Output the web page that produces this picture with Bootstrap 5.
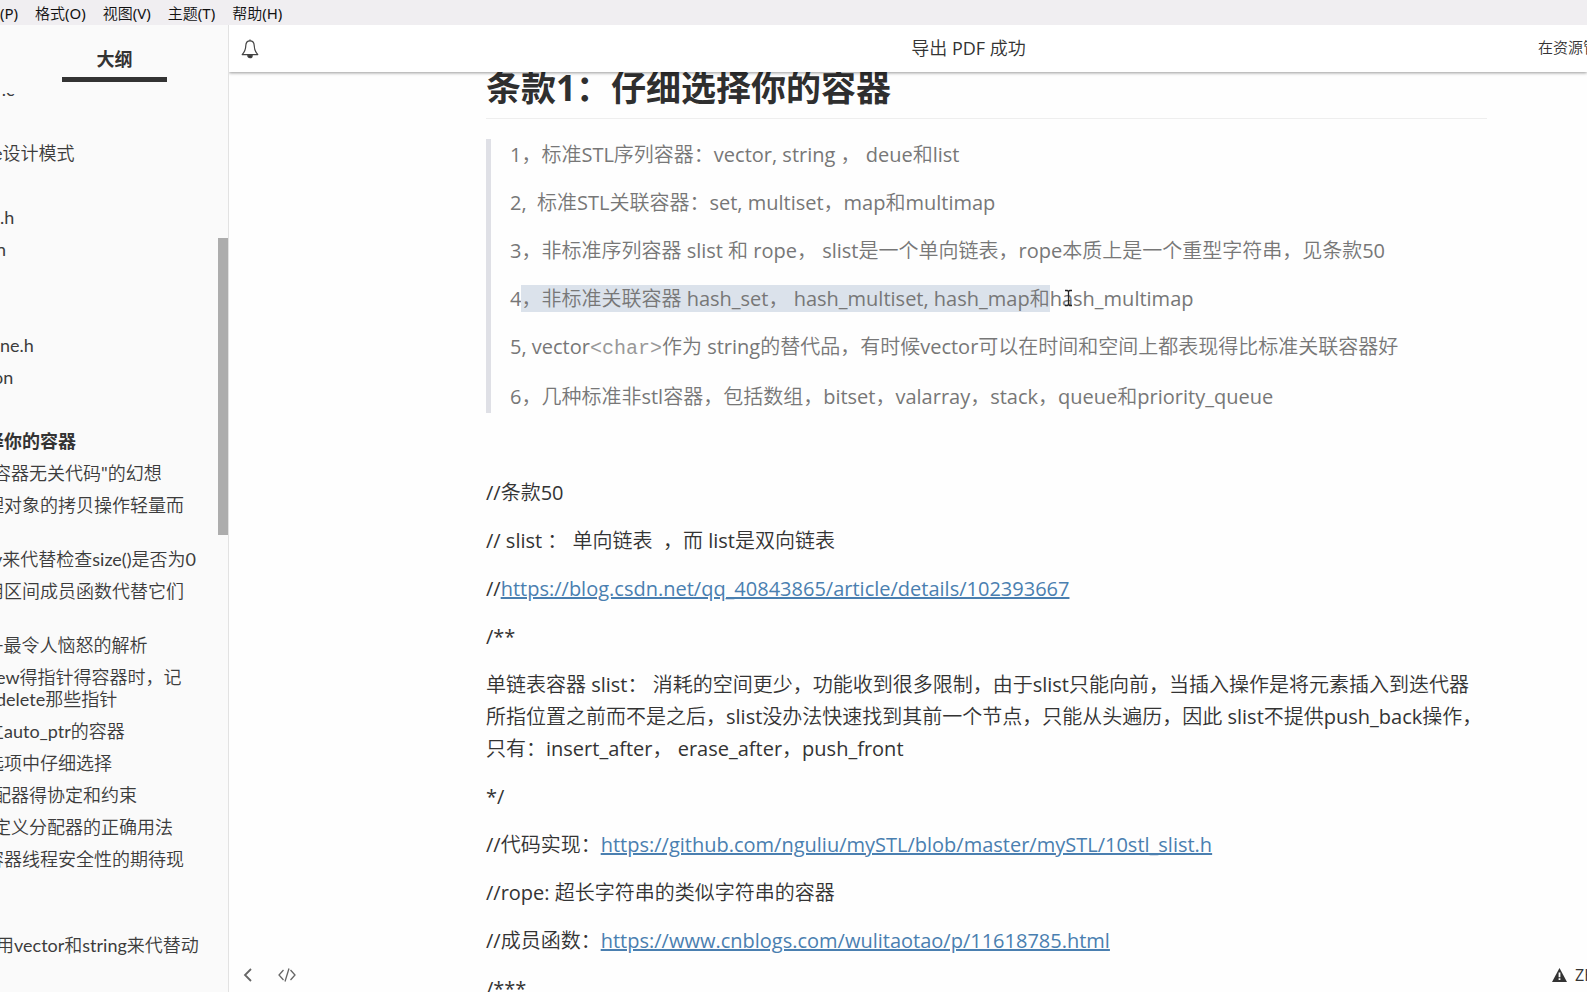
<!DOCTYPE html>
<html lang="zh-CN">
<head>
<meta charset="utf-8">
<meta name="viewport" content="width=device-width, initial-scale=1">
<title>条款1：仔细选择你的容器</title>
<link href="https://cdn.jsdelivr.net/npm/bootstrap@5.3.0/dist/css/bootstrap.min.css" rel="stylesheet">
<style>
  body { font-family: "Open Sans", "Noto Sans CJK SC DemiLight", "Noto Sans CJK SC", sans-serif; color: #333; background: #fefefe; }
  button { color: inherit; }

  .menu-strip { height: 25px; background: #f0eef1; font-family: "Noto Sans", "Noto Sans CJK SC DemiLight", "Noto Sans CJK SC", sans-serif; font-size: 15px; line-height: 27px; gap: 17px; }
  .menu-strip button { color: #111; white-space: nowrap; }

  .outline-pane { width: 229px; background: #fafafa; border-right: 1px solid #e2e2e2; font-size: 18px; }
  .outline-head { height: 68px; padding: 18px 0 0 62px; }
  .outline-tab { width: 105px; height: 39px; border-bottom: 5px solid #333 !important; font-family: "Noto Sans CJK SC", sans-serif; line-height: 30px; }
  .outline-list { margin-top: -20px; line-height: 22px; font-family: Lato, "Noto Sans CJK SC DemiLight", "Noto Sans CJK SC", sans-serif; }
  .outline-list li { padding: 5px 0; min-height: 32px; white-space: nowrap; }
  .outline-list .two-lines { min-height: 54px; }
  .outline-list a { color: #3c3c3c; text-decoration: none; display: block; }
  .outline-list .fw-bold { color: #333; font-family: "Open Sans", "Noto Sans CJK SC", sans-serif; }
  .cut-s { margin-left: -4px; }
  .cut-m { margin-left: -7px; }
  .cut-l { margin-left: -14px; }
  .scroll-thumb { top: 213px; right: 0; width: 10px; height: 297px; background: #adadad; }

  .notice-bar { height: 47px; background: #fff; box-shadow: 0 1px 3px rgba(0,0,0,.4); z-index: 2; font-size: 18px; }
  .notice-bell { width: 170px; padding-left: 12px; }
  .notice-action { width: 49px; padding-bottom: 3px; font-size: 15px; }

  .doc { margin-top: -6px; padding: 0 100px 0 257px; font-size: 20px; line-height: 32px; }
  .doc h2 { font-family: "Open Sans", "Noto Sans CJK SC", sans-serif; font-size: 35px; font-weight: 700; line-height: 43px; padding-bottom: 9px; border-bottom: 1px solid #eee; margin-bottom: 20px; color: #2f2f2f; }
  .doc p { margin-bottom: 16px; min-height: 32px; }
  .doc a { color: #4a7fb0; }
  .doc blockquote { border-left: 5px solid #dfe0e6; padding-left: 19px; color: #777; font-size: 20px; margin-bottom: 16px; }
  .doc blockquote p:last-child { margin-bottom: 0; }
  .picked { background: #dbe2eb; }
  .raw-tag { font-family: "Liberation Mono", monospace; color: #999; }
  .caret-pointer { left: 14px; top: 4px; }

  .doc-foot { left: 0; right: 0; bottom: 0; height: 34px; font-size: 16px; padding-left: 13px; color: #666; }
  .doc-foot .lang { width: 35px; color: #333; gap: 8px; white-space: nowrap; }
</style>
</head>
<body class="vh-100 overflow-hidden d-flex flex-column">

<nav class="menu-strip d-flex flex-shrink-0" aria-label="菜单">
  <button class="border-0 bg-transparent p-0">(P)</button>
  <button class="border-0 bg-transparent p-0">格式(O)</button>
  <button class="border-0 bg-transparent p-0">视图(V)</button>
  <button class="border-0 bg-transparent p-0">主题(T)</button>
  <button class="border-0 bg-transparent p-0">帮助(H)</button>
</nav>

<div class="d-flex flex-grow-1 overflow-hidden">
  <aside class="outline-pane position-relative d-flex flex-column flex-shrink-0 overflow-hidden">
    <div class="outline-head flex-shrink-0">
      <button class="outline-tab border-0 bg-transparent p-0 fw-bold d-flex justify-content-center">大纲</button>
    </div>
    <div class="overflow-hidden">
      <ul class="outline-list list-unstyled mb-0">
        <li><a href="#" class="cut-s">r.c</a></li>
        <li></li>
        <li><a href="#" class="cut-m">e设计模式</a></li>
        <li></li>
        <li><a href="#">.h</a></li>
        <li><a href="#" class="cut-s">n</a></li>
        <li></li>
        <li></li>
        <li><a href="#">ne.h</a></li>
        <li><a href="#" class="cut-m">on</a></li>
        <li></li>
        <li><a href="#" class="cut-l fw-bold">择你的容器</a></li>
        <li><a href="#" class="cut-m">容器无关代码"的幻想</a></li>
        <li class="two-lines"><a href="#" class="cut-l">理对象的拷贝操作轻量而</a></li>
        <li><a href="#" class="cut-m">y来代替检查size()是否为0</a></li>
        <li class="two-lines"><a href="#" class="cut-l">用区间成员函数代替它们</a></li>
        <li><a href="#" class="cut-m">+最令人恼怒的解析</a></li>
        <li><a href="#" class="cut-s">ew得指针得容器时，记<br>delete那些指针</a></li>
        <li><a href="#" class="cut-l">立auto_ptr的容器</a></li>
        <li><a href="#" class="cut-l">选项中仔细选择</a></li>
        <li><a href="#" class="cut-m">配器得协定和约束</a></li>
        <li><a href="#" class="cut-m">定义分配器的正确用法</a></li>
        <li class="two-lines"><a href="#" class="cut-l">容器线程安全性的期待现</a></li>
        <li></li>
        <li><a href="#" class="cut-s">用vector和string来代替动</a></li>
      </ul>
    </div>
    <div class="scroll-thumb position-absolute"></div>
  </aside>

  <main class="position-relative flex-grow-1 overflow-hidden">
    <div class="notice-bar position-relative d-flex align-items-center">
      <div class="notice-bell">
        <button class="border-0 bg-transparent p-0 d-flex" aria-label="通知">
          <svg width="18" height="20" viewBox="0 0 18 20" fill="none" stroke="#444" stroke-width="1.2" stroke-linejoin="round"><path d="M9 1.800C6.200 1.800 4.900 3.800 4.800 6.600 4.700 10.800 4 12.800 1.200 15.600h15.600C14 12.800 13.300 10.800 13.200 6.600 13.100 3.800 11.800 1.800 9 1.800z"/><path d="M9 .4v1.400"/><path d="M6.800 16.400h4.400c0 3-4.400 3-4.400 0z" fill="#333"/></svg>
        </button>
      </div>
      <div class="flex-grow-1 text-center">导出 PDF 成功</div>
      <div class="notice-action overflow-hidden"><a href="#" class="text-reset text-decoration-none text-nowrap">在资源管</a></div>
    </div>

    <article class="doc">
      <h2>条款1：仔细选择你的容器</h2>
      <blockquote>
        <p>1，标准STL序列容器：vector, string ， deue和list</p>
        <p>2,&nbsp; 标准STL关联容器：set, multiset，map和multimap</p>
        <p>3，非标准序列容器 slist 和 rope， slist是一个单向链表，rope本质上是一个重型字符串，见条款50</p>
        <p>4<span class="picked">，非标准关联容器 hash_set， hash_multiset, hash_map和</span><span class="position-relative">hash_multimap<svg class="caret-pointer position-absolute" width="9" height="18" viewBox="0 0 9 18" fill="none" stroke="#222" stroke-width="1.3"><path d="M1 1.5h2.3l1.2 1 1.2-1H8M4.5 2.5v13M1 16.5h2.3l1.2-1 1.2 1H8"/></svg></span></p>
        <p>5, vector<span class="raw-tag">&lt;char&gt;</span>作为 string的替代品，有时候vector可以在时间和空间上都表现得比标准关联容器好</p>
        <p>6，几种标准非stl容器，包括数组，bitset，valarray，stack，queue和priority_queue</p>
      </blockquote>
      <p></p>
      <p>//条款50</p>
      <p>// slist ： 单向链表&nbsp; ，而 list是双向链表</p>
      <p>//<a href="https://blog.csdn.net/qq_40843865/article/details/102393667">https://blog.csdn.net/qq_40843865/article/details/102393667</a></p>
      <p>/**</p>
      <p>单链表容器 slist： 消耗的空间更少，功能收到很多限制，由于slist只能向前，当插入操作是将元素插入到迭代器所指位置之前而不是之后，slist没办法快速找到其前一个节点，只能从头遍历，因此 slist不提供push_back操作，只有：insert_after， erase_after，push_front</p>
      <p>*/</p>
      <p>//代码实现：<a href="https://github.com/nguliu/mySTL/blob/master/mySTL/10stl_slist.h">https://github.com/nguliu/mySTL/blob/master/mySTL/10stl_slist.h</a></p>
      <p>//rope: 超长字符串的类似字符串的容器</p>
      <p>//成员函数：<a href="https://www.cnblogs.com/wulitaotao/p/11618785.html">https://www.cnblogs.com/wulitaotao/p/11618785.html</a></p>
      <p>/***</p>
    </article>

    <div class="doc-foot position-absolute d-flex align-items-center">
      <button class="border-0 bg-transparent p-0 d-flex" aria-label="返回"><svg width="12" height="14" viewBox="0 0 12 14" fill="none" stroke="#666" stroke-width="1.8"><path d="M9 1 3 7l6 6"/></svg></button>
      <button class="border-0 bg-transparent p-0 d-flex ms-4" aria-label="源代码模式"><svg width="18" height="16" viewBox="0 0 18 16" fill="none" stroke="#666" stroke-width="1.3"><path d="M5.500 3 1 8l4.500 5M12.500 3 17 8l-4.500 5M11 1.500 7 14.500"/></svg></button>
      <div class="lang ms-auto d-flex align-items-center overflow-hidden">
        <svg class="flex-shrink-0" width="15" height="14" viewBox="0 0 15 14"><path d="M7.500 0 15 14H0z" fill="#333"/><path d="M6.600 4.500h1.800v4.700H6.600zM6.600 10.300h1.800v1.800H6.600z" fill="#fff"/></svg>
        <span>ZH</span>
      </div>
    </div>
  </main>
</div>

<script src="https://cdn.jsdelivr.net/npm/bootstrap@5.3.0/dist/js/bootstrap.bundle.min.js"></script>
</body>
</html>
